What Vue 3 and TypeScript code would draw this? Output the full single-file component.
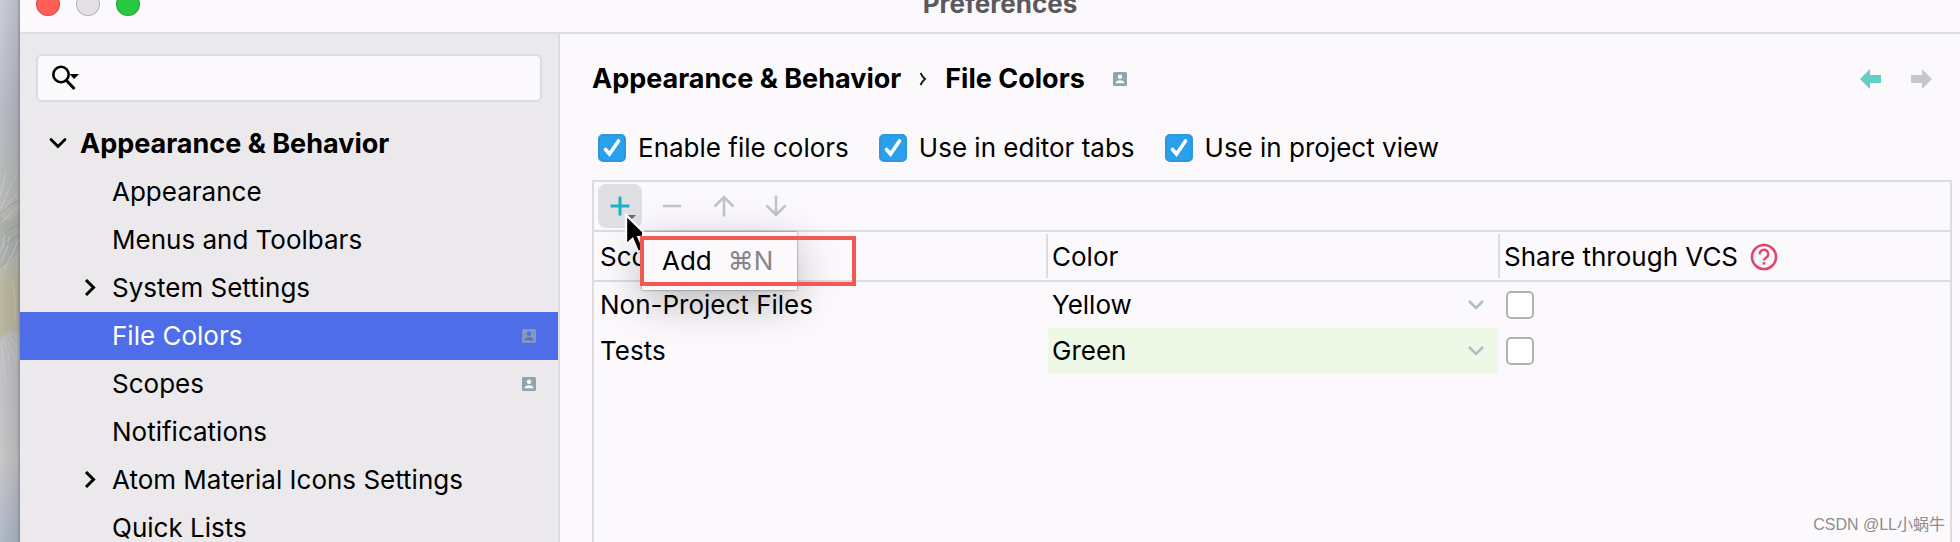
<script setup lang="ts">
import { ref } from 'vue'

interface TreeItem {
  label: string
  group?: 'open' | 'closed'
  root?: boolean
  selected?: boolean
  project?: boolean
}

interface ScopeRow {
  scope: string
  color: string
  shared: boolean
}

const tree: TreeItem[] = [
  { label: 'Appearance & Behavior', group: 'open', root: true },
  { label: 'Appearance' },
  { label: 'Menus and Toolbars' },
  { label: 'System Settings', group: 'closed' },
  { label: 'File Colors', selected: true, project: true },
  { label: 'Scopes', project: true },
  { label: 'Notifications' },
  { label: 'Atom Material Icons Settings', group: 'closed' },
  { label: 'Quick Lists' },
]

const options = ref([
  { id: 'enable', label: 'Enable file colors', on: true },
  { id: 'tabs', label: 'Use in editor tabs', on: true },
  { id: 'project', label: 'Use in project view', on: true },
])

const rows = ref<ScopeRow[]>([
  { scope: 'Non-Project Files', color: 'Yellow', shared: false },
  { scope: 'Tests', color: 'Green', shared: false },
])

const colors = ['Yellow', 'Green']
const query = ref('')
</script>

<template>
  <div class="desktop">
    <svg class="wallpaper" viewBox="0 0 20 542" preserveAspectRatio="none" aria-hidden="true">
      <defs>
        <linearGradient id="sky" x1="0" y1="0" x2="0" y2="1">
          <stop offset="0" stop-color="#cccedb" />
          <stop offset="0.2" stop-color="#bbbcc6" />
          <stop offset="0.32" stop-color="#b9bbb9" />
          <stop offset="0.55" stop-color="#bab9a9" />
          <stop offset="0.68" stop-color="#c3c3c6" />
          <stop offset="0.85" stop-color="#c9c7c8" />
          <stop offset="0.93" stop-color="#bcbfcb" />
          <stop offset="1" stop-color="#afbac7" />
        </linearGradient>
        <linearGradient id="edge">
          <stop offset="0" stop-color="#555a66" stop-opacity="0" />
          <stop offset="0.85" stop-color="#555a66" stop-opacity="0.18" />
          <stop offset="1" stop-color="#555a66" stop-opacity="0.5" />
        </linearGradient>
      </defs>
      <rect width="20" height="542" fill="url(#sky)" />
      <path d="M0 286 Q8 272 20 268 V336 Q14 324 6 334 L0 338Z" fill="#bcb89f" />
      <path d="M0 215 Q8 228 20 210 V246 Q12 262 0 268Z" fill="#adb2ab" />
      <g fill="none" stroke="#c6ccd6" stroke-width="1">
        <path d="M1 208 Q8 190 17 174 M3 212 Q12 198 20 190 M0 196 Q4 184 6 172 M2 222 Q10 212 19 207 M1 262 Q8 250 10 236 M4 268 Q14 254 19 238 M0 252 Q5 244 4 232 M3 338 Q9 352 11 376 M5 336 Q14 350 16 366 M1 342 Q4 360 6 386 M8 334 Q16 344 20 356" />
      </g>
      <g fill="none" stroke="#9ca29f" stroke-width="1">
        <path d="M0 214 Q9 204 20 200 M2 236 Q12 226 20 224 M6 246 Q14 236 20 236" />
        <path d="M12 280 Q17 296 14 326" stroke="#cbc7b0" />
      </g>
      <rect width="20" height="542" fill="url(#edge)" />
    </svg>

    <main class="window">
      <header class="titlebar">
        <div class="lights">
          <button class="light close" aria-label="Close"></button>
          <button class="light minimize" aria-label="Minimize" disabled></button>
          <button class="light zoom" aria-label="Zoom"></button>
        </div>
        <h1 class="title">Preferences</h1>
      </header>

      <div class="body">
        <aside class="sidebar">
          <label class="search">
            <svg width="30" height="28" viewBox="0 0 30 28" aria-hidden="true">
              <circle cx="11" cy="10.500" r="7.700" fill="none" stroke="#000" stroke-width="2.600" />
              <path d="M16.500 16.500 L24.500 25" stroke="#000" stroke-width="3" />
              <path d="M19.500 10 H29 L24.200 15Z" fill="#000" />
            </svg>
            <input v-model="query" type="text" aria-label="Search settings" />
          </label>

          <nav aria-label="Settings">
            <ul class="tree">
              <li v-for="item in tree" :key="item.label">
                <a href="#" class="node" :class="{ root: item.root, selected: item.selected }">
                  <span class="twisty">
                    <svg v-if="item.group === 'open'" width="20" height="20" viewBox="0 0 20 20" aria-hidden="true">
                      <path d="M3 5.500 L10 12.500 L17 5.500" fill="none" stroke="#000" stroke-width="2.800" stroke-linecap="round" />
                    </svg>
                    <svg v-else-if="item.group === 'closed'" width="20" height="20" viewBox="0 0 20 20" aria-hidden="true">
                      <path d="M6 2 L13.500 9.500 L6 17" fill="none" stroke="#000" stroke-width="3" />
                    </svg>
                  </span>
                  <span class="name">{{ item.label }}</span>
                  <svg v-if="item.project" class="badge" width="14" height="14" viewBox="0 0 14 14" aria-hidden="true">
                    <rect width="14" height="14" rx="1.500" fill="#90a4ae" />
                    <circle class="ink" cx="7" cy="4.800" r="2.200" />
                    <path class="ink" d="M2.500 11.300 Q3 8.300 7 8.300 Q11 8.300 11.500 11.300Z" />
                  </svg>
                </a>
              </li>
            </ul>
          </nav>
        </aside>

        <section class="content">
          <div class="heading">
            <h2 class="crumbs">
              <span>Appearance &amp; Behavior</span>
              <svg width="8" height="14" viewBox="0 0 8 14" aria-hidden="true">
                <path d="M1.500 1 Q3.500 5 6 7 Q3.500 9 1.500 13" fill="none" stroke="#111" stroke-width="1.800" />
              </svg>
              <span>File Colors</span>
            </h2>
            <svg class="badge" width="14" height="14" viewBox="0 0 14 14" aria-hidden="true">
              <rect width="14" height="14" rx="1.500" fill="#90a4ae" />
              <circle class="ink" cx="7" cy="4.800" r="2.200" />
              <path class="ink" d="M2.500 11.300 Q3 8.300 7 8.300 Q11 8.300 11.500 11.300Z" />
            </svg>
            <div class="history">
              <button class="plain" aria-label="Back">
                <svg width="22" height="20" viewBox="0 0 22 20"><path d="M0 10 L10 0 V6 H21 V14 H10 V20Z" fill="#66cdc4" /></svg>
              </button>
              <button class="plain" aria-label="Forward" disabled>
                <svg width="22" height="20" viewBox="0 0 22 20"><path d="M22 10 L12 0 V6 H1 V14 H12 V20Z" fill="#c7c6c8" /></svg>
              </button>
            </div>
          </div>

          <div class="options">
            <label v-for="option in options" :key="option.id" class="option">
              <span class="tick">
                <input v-model="option.on" class="box" type="checkbox" />
                <svg v-if="option.on" width="28" height="28" viewBox="0 0 28 28" aria-hidden="true">
                  <path d="M7.500 15.500 L11.500 20 L20.500 7" fill="none" stroke="#fff" stroke-width="3.600" stroke-linecap="round" />
                </svg>
              </span>
              <span>{{ option.label }}</span>
            </label>
          </div>

          <div class="panel">
            <div class="toolbar">
              <button class="tool active" aria-label="Add">
                <svg width="44" height="44" viewBox="0 0 44 44">
                  <path d="M22 12.500 V31.500 M12.500 22 H31.500" stroke="#1cb1c6" stroke-width="3" />
                  <path d="M28 31 H38 L33 36Z" fill="#546e7a" />
                </svg>
                <svg class="pointer" width="30" height="44" viewBox="0 0 30 44" aria-hidden="true">
                  <path d="M2 2 V32 L8.500 26 L14 39 L20 36.500 L14.500 24 L24 23.500Z" fill="#000" stroke="#fff" stroke-width="2.400" />
                </svg>
              </button>
              <button class="tool" aria-label="Remove" disabled>
                <svg width="44" height="44" viewBox="0 0 44 44"><path d="M13 22 H31" stroke="#c4c3c7" stroke-width="2.600" /></svg>
              </button>
              <button class="tool" aria-label="Move up" disabled>
                <svg width="44" height="44" viewBox="0 0 44 44"><path d="M22 32.500 V13.500 M12.500 22.500 L22 13 L31.500 22.500" fill="none" stroke="#c4c3c7" stroke-width="2.600" /></svg>
              </button>
              <button class="tool" aria-label="Move down" disabled>
                <svg width="44" height="44" viewBox="0 0 44 44"><path d="M22 11.500 V30.500 M12.500 21.500 L22 31 L31.500 21.500" fill="none" stroke="#c4c3c7" stroke-width="2.600" /></svg>
              </button>
              <div class="menu" role="menu">
                <button class="menu-item" role="menuitem">
                  <span>Add</span>
                  <kbd>⌘N</kbd>
                </button>
                <div class="marker"></div>
              </div>
            </div>

            <table class="scopes">
              <thead>
                <tr>
                  <th class="scope-col" scope="col"><div class="head">Scope</div></th>
                  <th class="color-col" scope="col"><div class="head">Color</div></th>
                  <th scope="col">
                    <div class="head">
                      Share through VCS
                      <svg width="28" height="28" viewBox="0 0 28 28" aria-hidden="true">
                        <circle cx="14" cy="14" r="12" fill="none" stroke="#e0476d" stroke-width="2.600" />
                        <path d="M9.800 11.300 A4.200 4.200 0 1 1 16 14.700 Q14 16 14 17.500" fill="none" stroke="#e0476d" stroke-width="2.400" />
                        <rect x="12.700" y="19" width="2.600" height="2.600" fill="#e0476d" />
                      </svg>
                    </div>
                  </th>
                </tr>
              </thead>
              <tbody>
                <tr v-for="row in rows" :key="row.scope">
                  <td class="scope">{{ row.scope }}</td>
                  <td class="color" :class="row.color.toLowerCase()">
                    <div class="picker">
                      <select v-model="row.color" :aria-label="`Color of ${row.scope}`">
                        <option v-for="color in colors" :key="color">{{ color }}</option>
                      </select>
                      <svg width="16" height="10" viewBox="0 0 16 10" aria-hidden="true">
                        <path d="M1 1 L8 8 L15 1" fill="none" stroke="#b0bec5" stroke-width="2.600" />
                      </svg>
                    </div>
                  </td>
                  <td class="share">
                    <input v-model="row.shared" class="box" type="checkbox" :aria-label="`Share ${row.scope} through VCS`" />
                  </td>
                </tr>
              </tbody>
            </table>
          </div>
        </section>
      </div>
    </main>
    <div class="watermark">CSDN @LL小蜗牛</div>
  </div>
</template>

<style>
body {
  margin: 0;
  overflow: hidden;
}
</style>

<style scoped>
.desktop {
  position: relative;
  display: grid;
  grid-template-columns: 20px minmax(0, 1fr);
  height: 100vh;
  overflow: hidden;
  color: #000;
  font: 400 26px/32px Inter, "Noto Sans CJK SC", sans-serif;
}

.desktop * {
  box-sizing: border-box;
}

.wallpaper {
  display: block;
  width: 20px;
  height: 100%;
}

button,
input,
select {
  margin: 0;
  padding: 0;
  border: 0;
  color: inherit;
  background: none;
  font: inherit;
}

svg {
  flex: none;
}

.window {
  display: flex;
  flex-direction: column;
  min-height: 0;
  background: #fbf9fc;
}

.titlebar {
  display: grid;
  grid-template-rows: 32px;
  grid-template-columns: 120px 1fr 100px;
  align-items: end;
  flex: none;
  height: 34px;
  border-bottom: 2px solid #dcdbde;
  overflow: hidden;
}

.lights {
  display: flex;
  gap: 16px;
  padding: 0 0 16px 16px;
}

.light {
  width: 24px;
  height: 24px;
  border: 1px solid #0003;
  border-radius: 50%;
}

.close {
  background: #ff5f57;
}

.minimize {
  background: #e3e1e4;
}

.zoom {
  background: #28c840;
}

.title {
  margin: 0;
  padding-bottom: 12px;
  color: #5b595d;
  font-size: 26px;
  line-height: 32px;
  font-weight: 700;
  text-align: center;
}

.body {
  display: flex;
  flex: 1;
  min-height: 0;
}

.sidebar {
  flex: none;
  width: 540px;
  border-right: 2px solid #dcdbde;
  background: #ebe9ec;
  overflow: hidden;
}

.search {
  display: flex;
  align-items: center;
  height: 48px;
  margin: 20px 16px 18px;
  padding: 0 12px;
  border: 2px solid #dcdbde;
  border-radius: 6px;
  background: #fbf9fc;
}

.search input {
  flex: 1;
  min-width: 0;
  outline: none;
}

.tree {
  margin: 0;
  padding: 0;
  list-style: none;
}

.node {
  display: flex;
  align-items: center;
  gap: 12px;
  height: 48px;
  padding: 0 22px 0 60px;
  color: inherit;
  text-decoration: none;
}

.node.root {
  padding-left: 28px;
  font-size: 27px;
  font-weight: 700;
}

.node.selected {
  color: #fff;
  background: #4f6de8;
}

.twisty {
  display: flex;
  width: 20px;
}

.name {
  flex: 1;
}

.badge .ink {
  fill: #fbf9fc;
}

.selected .badge {
  opacity: 0.8;
}

.selected .badge .ink {
  fill: #4f6de8;
}

.content {
  display: flex;
  flex: 1;
  flex-direction: column;
  min-width: 0;
  padding: 28px 8px 0 32px;
}

.heading {
  display: flex;
  align-items: center;
  height: 34px;
}

.crumbs {
  display: flex;
  align-items: center;
  gap: 18px;
  margin: 0 28px 0 0;
  font-size: 27px;
  line-height: 32px;
  font-weight: 700;
}

.history {
  display: flex;
  gap: 28px;
  margin-left: auto;
  padding-right: 20px;
}

.plain {
  display: flex;
}

.options {
  display: flex;
  gap: 30px;
  margin: 36px 0 16px;
  padding-left: 6px;
}

.option {
  display: flex;
  align-items: center;
  gap: 12px;
}

.tick {
  display: grid;
}

.tick > * {
  grid-area: 1 / 1;
  pointer-events: none;
}

.box {
  display: block;
  width: 28px;
  height: 28px;
  border: 2px solid #b2b1b4;
  border-radius: 5px;
  background: #fff;
  appearance: none;
}

.box:checked {
  border-color: #2f95dc;
  background: #28a0ec;
}

.panel {
  flex: 1;
  min-height: 0;
  border: 2px solid #dcdbde;
  border-bottom: 0;
}

.toolbar {
  position: relative;
  display: flex;
  gap: 8px;
  padding: 2px 4px;
  border-bottom: 2px solid #dcdbde;
}

.tool {
  position: relative;
  width: 44px;
  height: 44px;
  border-radius: 8px;
}

.tool svg {
  display: block;
}

.active {
  background: #e0dfe2;
}

.tool .pointer {
  position: absolute;
  z-index: 1;
  top: 29px;
  left: 26px;
}

.menu {
  position: absolute;
  z-index: 2;
  top: 50px;
  left: 48px;
  background: #fbf9fc;
  box-shadow: 0 0 2px #0008, 0 12px 44px #0004;
}

.menu-item {
  display: flex;
  align-items: center;
  gap: 16px;
  height: 58px;
  padding: 0 24px 0 20px;
}

.menu kbd {
  color: #868588;
  font: inherit;
}

.marker {
  position: absolute;
  top: 4px;
  left: -2px;
  width: 216px;
  height: 50px;
  border: 4px solid #ef5b52;
}

.scopes {
  width: 100%;
  border-collapse: collapse;
  table-layout: fixed;
}

.scopes th,
.scopes td {
  padding: 0;
  font-weight: 400;
  text-align: left;
}

.scopes thead {
  border-bottom: 2px solid #dcdbde;
}

.scope-col {
  width: 454px;
}

.color-col {
  width: 452px;
}

.head {
  display: flex;
  align-items: center;
  gap: 12px;
  height: 44px;
  margin: 2px 0;
  padding: 2px 0 0 4px;
}

.scope-col .head {
  padding-left: 6px;
}

.scope-col .head,
.color-col .head {
  border-right: 2px solid #dcdbde;
}

.scopes tbody tr {
  height: 46px;
}

.scopes .scope {
  padding-left: 6px;
}

.picker {
  display: flex;
  align-items: center;
  height: 46px;
  margin-right: 2px;
  padding: 0 14px 0 4px;
}

.green .picker {
  background: #eef8e6;
}

.picker select {
  flex: 1;
  height: 32px;
  appearance: none;
}

.scopes .share {
  padding-left: 6px;
}

.watermark {
  position: absolute;
  right: 15px;
  bottom: 5px;
  color: #8c8b8e;
  font: 16px/24px "Liberation Sans", "Noto Sans CJK SC", sans-serif;
}
</style>
